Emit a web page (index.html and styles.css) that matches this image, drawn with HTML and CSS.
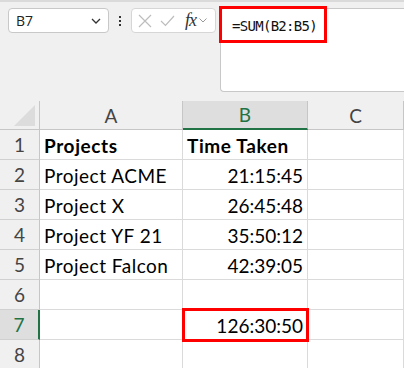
FILE: index.html
```html
<!DOCTYPE html>
<html lang="en">
<head>
    <meta charset="UTF-8">
    <title>Sum of times</title>
    <link rel="stylesheet" href="styles.css">
</head>
<body>
    <div class="topbar">
        <div class="namebox">
            <span>B7</span>
            <svg width="10" height="6" viewBox="0 0 10 6"><path d="M1 1 L5 5 L9 1" fill="none" stroke="#333" stroke-width="1.3"/></svg>
        </div>
        <div class="dots"><i></i><i></i><i></i></div>
        <div class="fxbox">
            <svg width="14" height="14" viewBox="0 0 14 14"><path d="M1 1 L13 13 M13 1 L1 13" stroke="#bdbdbd" stroke-width="1.2"/></svg>
            <svg width="15" height="12" viewBox="0 0 15 12"><path d="M1 6 L5.5 10.5 L14 1" fill="none" stroke="#bdbdbd" stroke-width="1.2"/></svg>
            <span class="fx">fx</span>
            <svg width="8" height="5" viewBox="0 0 8 5"><path d="M0.5 0.5 L4 4 L7.5 0.5" fill="none" stroke="#999" stroke-width="1"/></svg>
        </div>
        <div class="formula">
            <span class="formula-text">=SUM(B2:B5)</span>
            <div class="highlight formula-mark"></div>
        </div>
    </div>

    <div class="sheet">
        <!-- column headers -->
        <div class="corner">
            <svg width="22" height="21" viewBox="0 0 22 21"><path d="M21 0 L21 21 L0 21 Z" fill="#dcdcdc"/></svg>
        </div>
        <div class="colhead">A</div>
        <div class="colhead selected">B</div>
        <div class="colhead">C</div>

        <div class="rowhead">1</div>
        <div class="cell bold">Projects</div>
        <div class="cell bold">Time Taken</div>
        <div class="cell"></div>

        <div class="rowhead">2</div>
        <div class="cell">Project ACME</div>
        <div class="cell num">21:15:45</div>
        <div class="cell"></div>

        <div class="rowhead">3</div>
        <div class="cell">Project X</div>
        <div class="cell num">26:45:48</div>
        <div class="cell"></div>

        <div class="rowhead">4</div>
        <div class="cell">Project YF 21</div>
        <div class="cell num">35:50:12</div>
        <div class="cell"></div>

        <div class="rowhead">5</div>
        <div class="cell">Project Falcon</div>
        <div class="cell num">42:39:05</div>
        <div class="cell"></div>

        <div class="rowhead">6</div>
        <div class="cell"></div>
        <div class="cell"></div>
        <div class="cell"></div>

        <div class="rowhead selected">7</div>
        <div class="cell"></div>
        <div class="cell num active">126:30:50<div class="highlight cell-mark"></div></div>
        <div class="cell"></div>

        <div class="rowhead">8</div>
        <div class="cell"></div>
        <div class="cell"></div>
        <div class="cell"></div>
    </div>
</body>
</html>
```

FILE: styles.css
```css
body {
    margin: 0;
    width: 404px;
    height: 368px;
    overflow: hidden;
    background-color: #f0f0f0;
    font-family: Lato, "Liberation Sans", sans-serif;
}

.topbar {
    display: flex;
    align-items: flex-start;
    height: 101px;
    box-sizing: border-box;
    padding: 8px 0 0 8px;
    border-top: 2px solid #dadada;
}

.namebox {
    width: 101px;
    height: 25px;
    box-sizing: border-box;
    margin-top: -2px;
    background-color: white;
    border: 1px solid #c8c8c8;
    border-radius: 4px;
    display: flex;
    align-items: center;
    justify-content: space-between;
    padding: 0 7px 0 7px;
    font-family: "Open Sans", sans-serif;
    font-size: 14px;
    color: #222;
}

.dots {
    width: 22px;
    height: 25px;
    margin-top: -2px;
    display: flex;
    flex-direction: column;
    align-items: center;
    justify-content: center;
    gap: 2px;
}

.dots i {
    width: 2px;
    height: 2px;
    background-color: #333;
}

.fxbox {
    width: 85px;
    height: 25px;
    box-sizing: border-box;
    margin-top: -2px;
    background-color: white;
    border: 1px solid #d6d6d6;
    border-radius: 4px;
    display: flex;
    align-items: center;
    padding: 0 4px 0 6px;
    gap: 8px;
}

.fx {
    font-family: "Liberation Serif", serif;
    font-style: italic;
    font-size: 18px;
    color: #333;
    margin-left: 2px;
    margin-right: -5px;
    letter-spacing: -1px;
}

.formula {
    position: relative;
    flex: 1;
    height: 84px;
    margin-left: 4px;
    margin-top: -2px;
    box-sizing: border-box;
    background-color: white;
    border: 1px solid #c8c8c8;
    border-right: none;
    border-radius: 4px 0 0 4px;
    padding: 6px 0 0 11px;
}

.formula-text {
    font-family: "DejaVu Sans Mono", monospace;
    font-size: 14px;
    letter-spacing: -0.7px;
    color: #111;
}

.highlight {
    position: absolute;
    box-sizing: border-box;
    border: 3px solid #ff0000;
}

.formula-mark {
    left: -2px;
    top: -3px;
    width: 108px;
    height: 37px;
}

.sheet {
    display: grid;
    grid-template-columns: 40px 143px 125px 96px;
    grid-template-rows: 29px repeat(8, 30px);
    font-size: 19px;
}

.corner, .colhead, .rowhead, .cell {
    box-sizing: border-box;
    border-right: 1px solid #dadada;
    border-bottom: 1px solid #dadada;
}

.corner {
    display: flex;
    align-items: flex-end;
    justify-content: flex-end;
    padding: 0 3px 3px 0;
    border-right-color: #c6c6c6;
    border-bottom-color: #c6c6c6;
}

.colhead {
    display: flex;
    align-items: center;
    justify-content: center;
    color: #444;
    border-bottom-color: #c6c6c6;
    border-right-color: #c6c6c6;
}

.colhead.selected {
    background-color: #dedede;
    color: #217346;
    border-bottom: 2px solid #217346;
}

.rowhead {
    display: flex;
    align-items: center;
    justify-content: center;
    color: #444;
    border-right-color: #c6c6c6;
    border-bottom-color: #d0d0d0;
}

.rowhead.selected {
    background-color: #dedede;
    color: #217346;
    border-right: 2px solid #217346;
}

.cell {
    background-color: white;
    color: #000;
    display: flex;
    align-items: center;
    padding: 1px 4px 0 4px;
    white-space: nowrap;
    letter-spacing: 0.5px;
}

.cell.bold {
    font-weight: bold;
    letter-spacing: 0.6px;
}

.cell.num {
    justify-content: flex-end;
    letter-spacing: 0;
}

.cell.active {
    position: relative;
}

.cell-mark {
    left: -1px;
    top: -2px;
    width: 127px;
    height: 34px;
    border-width: 3px;
}
```
